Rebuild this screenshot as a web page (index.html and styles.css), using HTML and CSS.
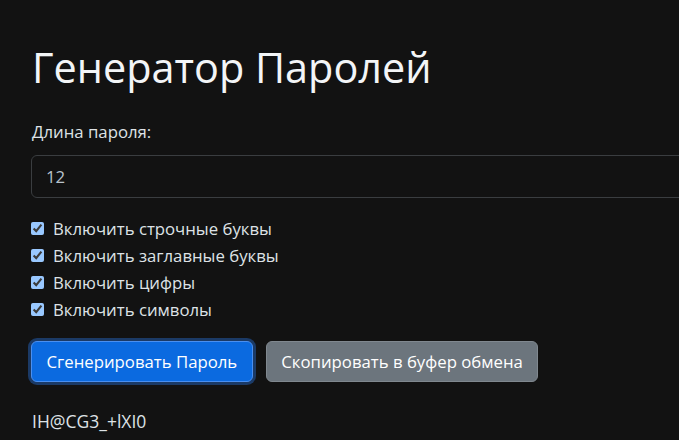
FILE: index.html
```html
<!DOCTYPE html>
<html lang="ru">
<head>
<meta charset="utf-8">
<title>Генератор Паролей</title>
<link rel="stylesheet" href="styles.css">
</head>
<body>
<main class="page">
  <h1 class="title">Генератор Паролей</h1>
  <label class="field-label" for="len">Длина пароля:</label>
  <input class="field" id="len" type="number" value="12">
  <div class="options">
    <label class="opt"><input type="checkbox" checked><span>Включить строчные буквы</span></label>
    <label class="opt"><input type="checkbox" checked><span>Включить заглавные буквы</span></label>
    <label class="opt"><input type="checkbox" checked><span>Включить цифры</span></label>
    <label class="opt"><input type="checkbox" checked><span>Включить символы</span></label>
  </div>
  <div class="actions">
    <button class="btn btn-primary" type="button">Сгенерировать Пароль</button>
    <button class="btn btn-secondary" type="button">Скопировать в буфер обмена</button>
  </div>
  <p class="result">IH@CG3_+lXI0</p>
</main>
</body>
</html>
```
FILE: styles.css
```css
:root { color-scheme: dark; }
html, body { margin: 0; padding: 0; overflow: hidden; background: #121212; }
body {
  font-family: "Open Sans", "Noto Sans", sans-serif;
  color: #dee2e6;
  font-size: 16.75px;
}
.page {
  padding: 42px 0 0 32px;
  width: 720px;
  display: flex;
  flex-direction: column;
  align-items: flex-start;
}
.title {
  margin: 0;
  font-size: 41.4px;
  font-weight: 400;
  line-height: 50px;
  color: #f3f5f7;
}
.field-label {
  margin-top: 28px;
  line-height: 24px;
}
.field {
  box-sizing: border-box;
  margin: 11px 0 0 -1px;
  width: 720px;
  height: 43px;
  padding: 0 14px;
  background: #121212;
  border: 1px solid #3a3d40;
  border-radius: 6px;
  color: #b9c3cd;
  font: inherit;
  -moz-appearance: textfield;
}
.field::-webkit-inner-spin-button, .field::-webkit-outer-spin-button { -webkit-appearance: none; margin: 0; }
.options {
  margin-top: 17px;
  display: flex;
  flex-direction: column;
}
.opt {
  height: 27px;
  display: flex;
  align-items: center;
  gap: 9px;
}
.opt input {
  margin: 0 0 0 -1px;
  width: 13px;
  height: 13px;
}
.actions {
  margin-top: 18px;
  display: flex;
  gap: 13px;
}
.btn {
  height: 41px;
  padding: 0 14.5px;
  font: inherit;
  color: #fff;
  border-radius: 6px;
  border: 1px solid transparent;
}
.btn-primary {
  margin-left: -1px;
  background: #0b6ae0;
  border-color: #4a8ff0;
  box-shadow: 0 0 0 3px #1b3a66;
}
.btn-secondary {
  background: #6c757d;
  border-color: #80888f;
}
.result {
  margin: 27px 0 0;
  line-height: 24px;
  font-size: 17.5px;
}
```
